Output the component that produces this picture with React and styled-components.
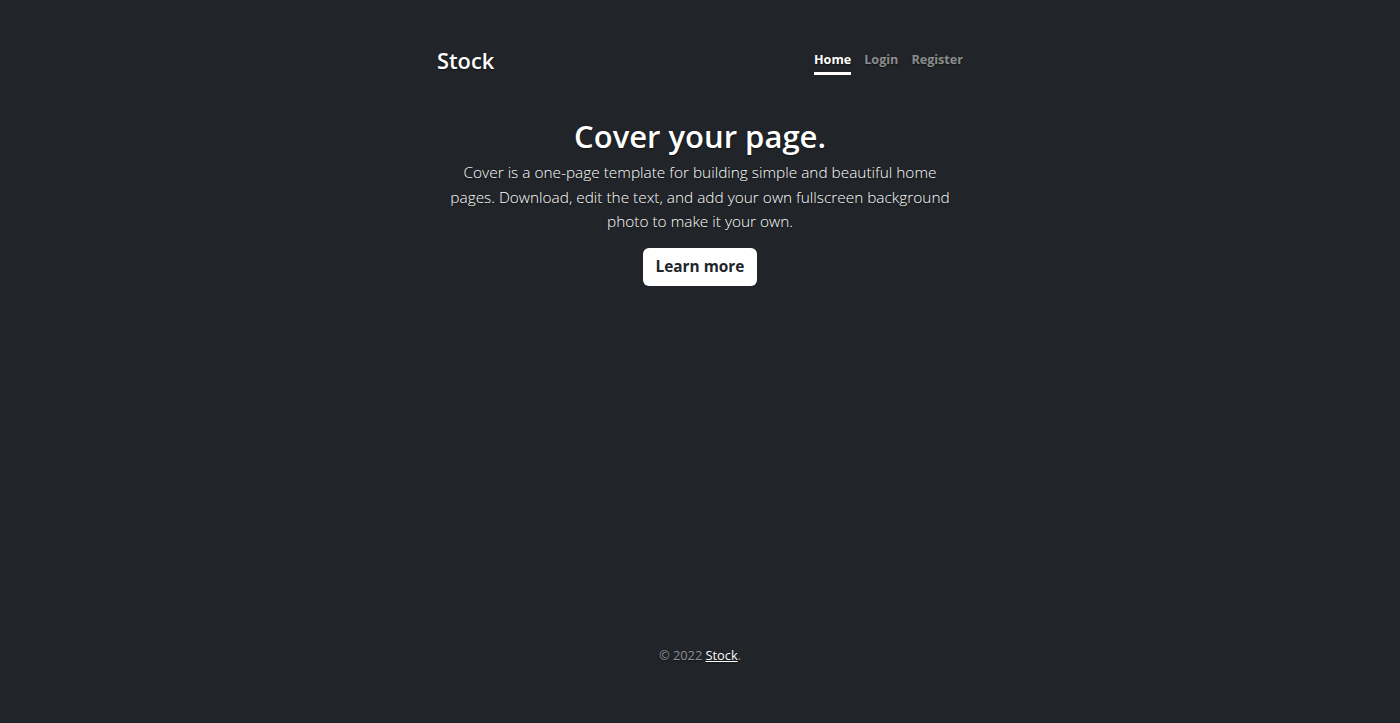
import React from 'react'
import styled, { createGlobalStyle } from 'styled-components'

const GlobalStyle = createGlobalStyle`
  html, body {
    margin: 0;
    padding: 0;
    height: 100%;
    background-color: #212529;
  }
  body {
    font-family: "Open Sans", "Noto Sans", "Liberation Sans", sans-serif;
    color: #fff;
  }
  #root {
    height: 100%;
  }
`

const Page = styled.div`
  height: 723px;
  display: flex;
  flex-direction: column;
  align-items: center;
  text-shadow: 0 .05rem .1rem rgba(0, 0, 0, .5);
`

const Header = styled.header`
  width: 526px;
  padding-top: 47px;
  display: flex;
  justify-content: space-between;
  align-items: flex-start;
`

const Brand = styled.h3`
  margin: 0;
  font-size: 21.8px;
  font-weight: 600;
  line-height: 28px;
`

const NavList = styled.nav`
  display: flex;
  gap: 13px;
  padding-top: 3px;
`

const NavItem = styled.a`
  font-size: 12.6px;
  font-weight: 700;
  line-height: 19px;
  padding-bottom: 3px;
  color: ${({ active }) => (active ? '#fff' : 'rgba(255, 255, 255, .5)')};
  border-bottom: 3px solid ${({ active }) => (active ? '#fff' : 'transparent')};
  text-decoration: none;
`

const Main = styled.main`
  width: 512px;
  padding-top: 42px;
  display: flex;
  flex-direction: column;
  align-items: center;
  text-align: center;
`

const Title = styled.h1`
  margin: 0 0 6px;
  font-size: 31px;
  font-weight: 600;
  line-height: 38px;
`

const Lead = styled.p`
  margin: 0 0 13px;
  font-size: 15.4px;
  font-weight: 300;
  line-height: 24.6px;
`

const Button = styled.a`
  display: inline-block;
  background: #fff;
  color: #212529;
  text-shadow: none;
  font-size: 15.4px;
  font-weight: 700;
  line-height: 24px;
  padding: 7px 13px;
  border-radius: 6px;
  text-decoration: none;
`

const Footer = styled.footer`
  margin-top: auto;
  padding-bottom: 58px;
  font-size: 12.8px;
  line-height: 19px;
  color: rgba(255, 255, 255, .5);
`

const FooterLink = styled.a`
  color: #fff;
  text-decoration: underline;
`

export default function App() {
  return (
    <>
      <GlobalStyle />
      <Page>
        <Header>
          <Brand>Stock</Brand>
          <NavList>
            <NavItem href="#" active>Home</NavItem>
            <NavItem href="#">Login</NavItem>
            <NavItem href="#">Register</NavItem>
          </NavList>
        </Header>
        <Main>
          <Title>Cover your page.</Title>
          <Lead>
            Cover is a one-page template for building simple and beautiful home
            pages. Download, edit the text, and add your own fullscreen background
            photo to make it your own.
          </Lead>
          <Button href="#">Learn more</Button>
        </Main>
        <Footer>
          © 2022 <FooterLink href="#">Stock</FooterLink>.
        </Footer>
      </Page>
    </>
  )
}
